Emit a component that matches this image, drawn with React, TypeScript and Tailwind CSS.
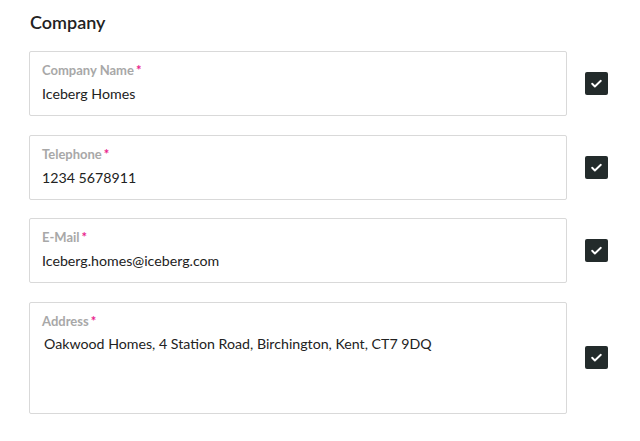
import { useState } from 'react';

type Field = {
  label: string;
  value: string;
  multiline?: boolean;
};

const fields: Field[] = [
  { label: 'Company Name', value: 'Iceberg Homes' },
  { label: 'Telephone', value: '1234 5678911' },
  { label: 'E-Mail', value: 'Iceberg.homes@iceberg.com' },
  { label: 'Address', value: 'Oakwood Homes, 4 Station Road, Birchington, Kent, CT7 9DQ', multiline: true },
];

function CheckBox() {
  return (
    <div className="flex h-[23px] w-[23px] shrink-0 items-center justify-center rounded-[2px] bg-[#232b2b]">
      <svg width="13" height="13" viewBox="0 0 24 24" fill="none" stroke="white" strokeWidth="3.5" strokeLinecap="round" strokeLinejoin="round">
        <path d="M4 12.5l5 5L20 7" />
      </svg>
    </div>
  );
}

function FieldRow({ field }: { field: Field }) {
  const [value, setValue] = useState(field.value);
  const boxClass = field.multiline ? 'h-[112px]' : 'h-[65px]';
  return (
    <div className="flex items-center gap-[18px]">
      <div className={`${boxClass} w-[538px] rounded-[2px] border border-[#d9d9d9] bg-white px-3 pt-[8px]`}>
        <div className="text-[13px] font-bold leading-[20px] text-[#a8a8a8]">
          {field.label}
          <span className="ml-[2px] text-[#e91e8c]">*</span>
        </div>
        {field.multiline ? (
          <textarea
            className="mt-[3px] block w-full resize-none px-[2px] text-[14.2px] leading-[20px] text-[#222] outline-none"
            rows={3}
            value={value}
            onChange={(e) => setValue(e.target.value)}
          />
        ) : (
          <input
            className="mt-[4px] block w-full text-[14.2px] leading-[20px] text-[#222] outline-none"
            value={value}
            onChange={(e) => setValue(e.target.value)}
          />
        )}
      </div>
      <CheckBox />
    </div>
  );
}

export default function App() {
  return (
    <div className="min-h-screen bg-white pl-[29px] pt-[10px] font-['Lato',sans-serif]">
      <h2 className="mb-[17px] pl-[1px] text-[18px] font-semibold leading-[24px] text-[#222]">Company</h2>
      <div className="flex flex-col gap-[18.5px]">
        {fields.map((f) => (
          <FieldRow key={f.label} field={f} />
        ))}
      </div>
    </div>
  );
}
